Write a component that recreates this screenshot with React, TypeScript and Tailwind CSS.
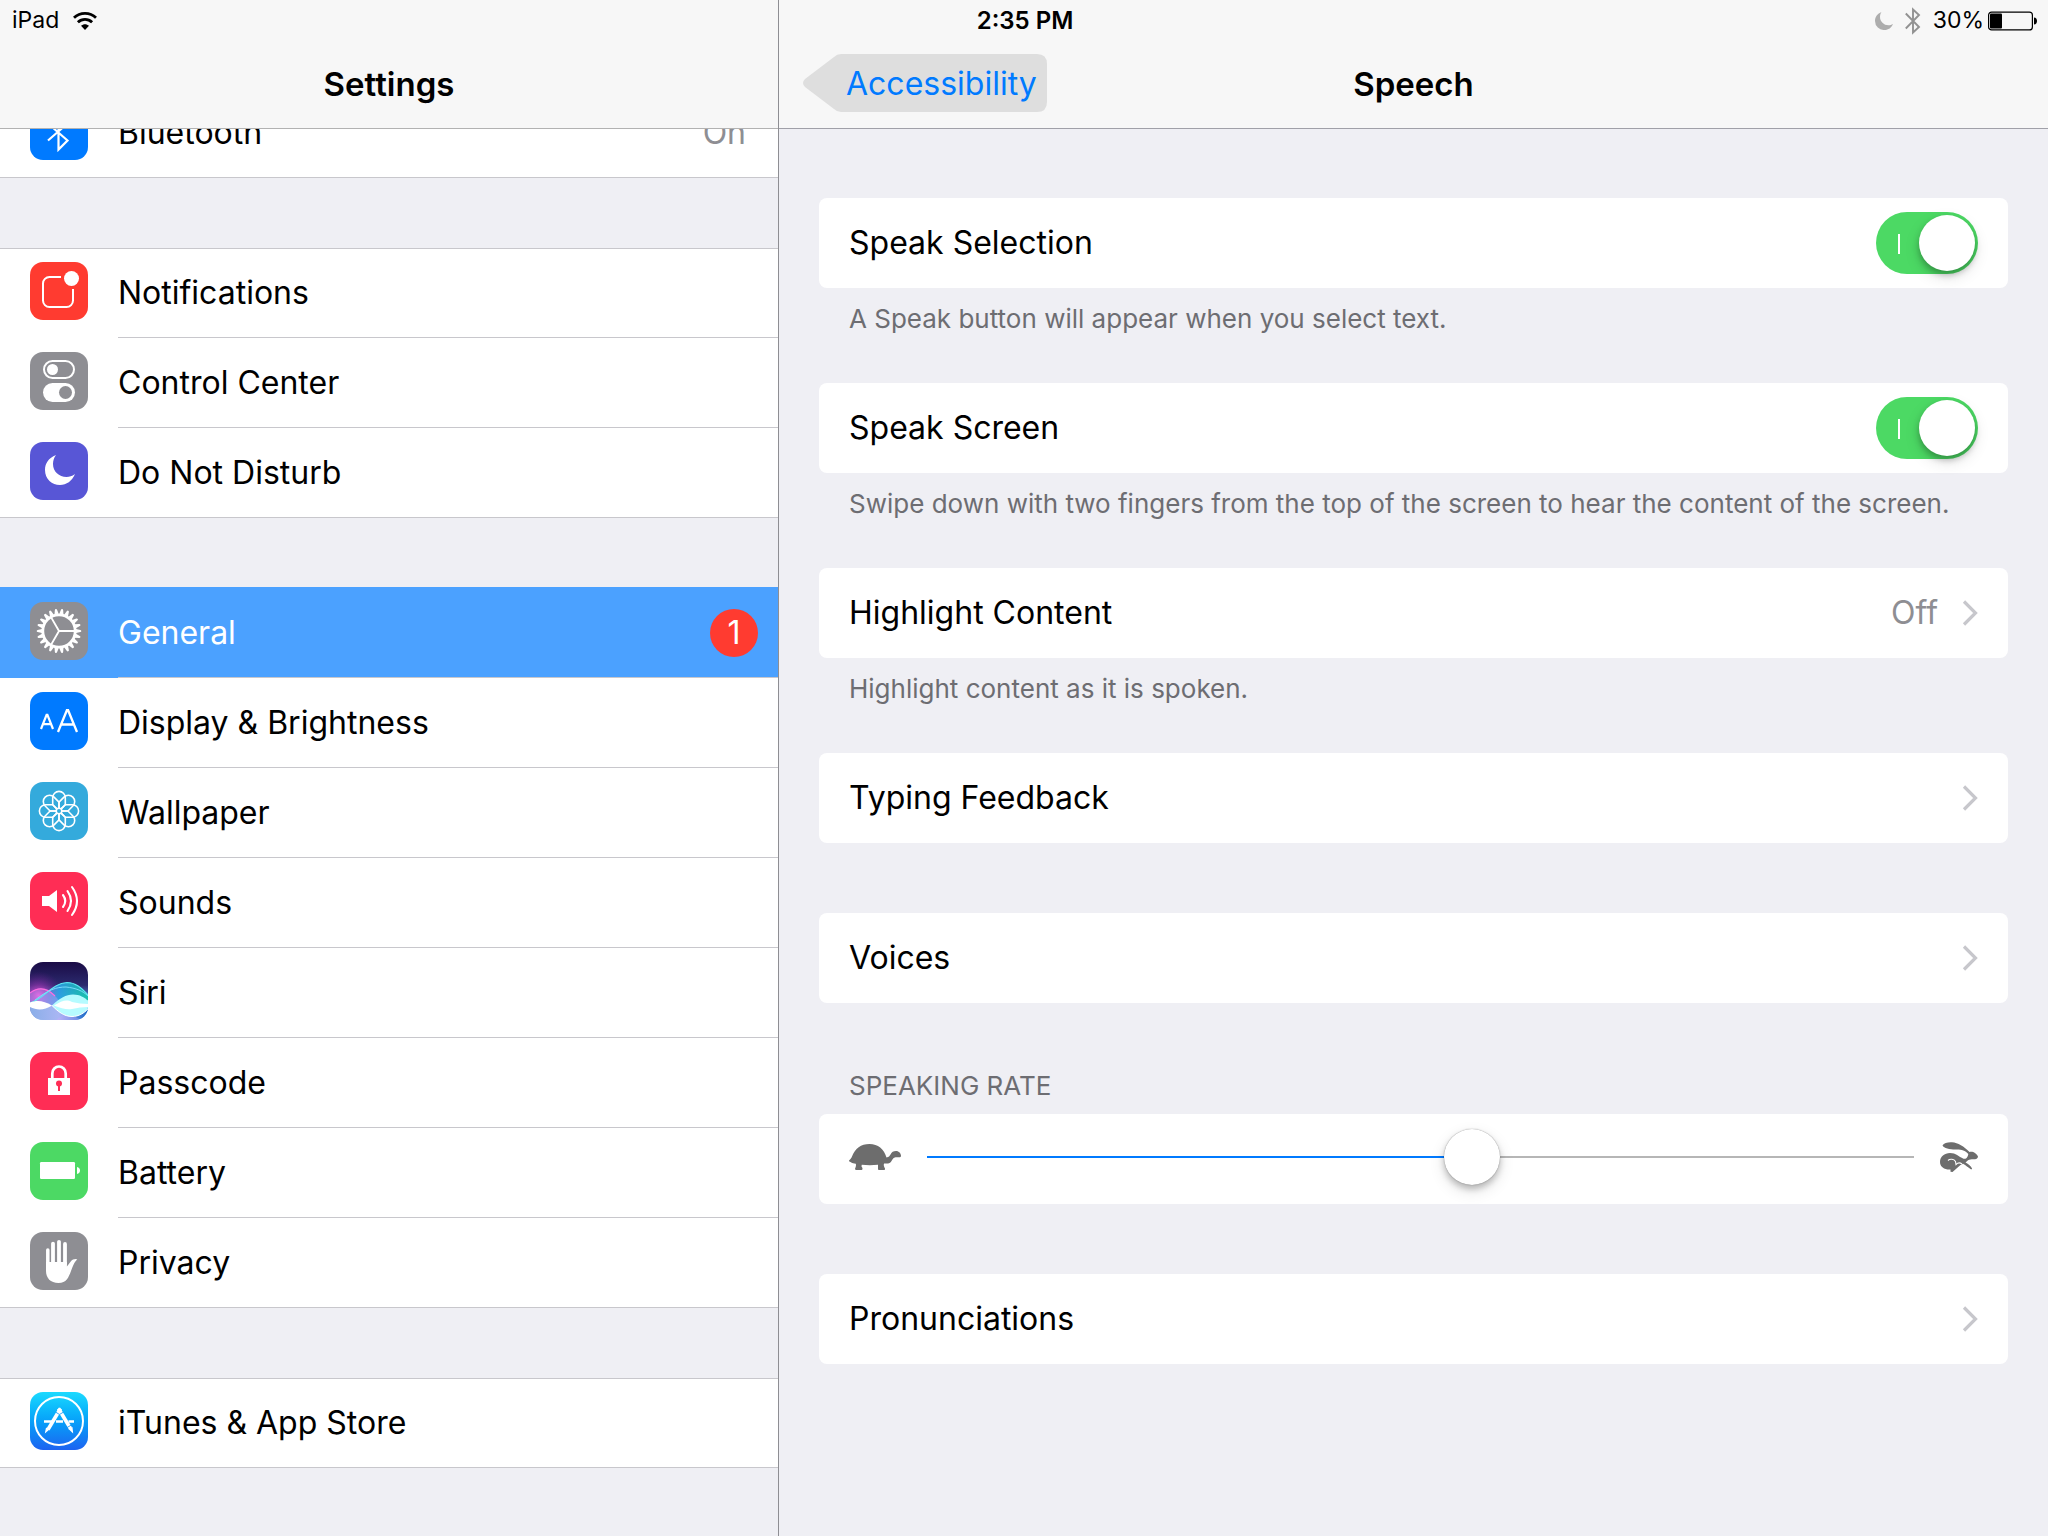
import { useState } from "react";
import type { CSSProperties, ReactNode } from "react";

function Tile({ children, className }: { children?: ReactNode; className: string }) {
  return (
    <svg viewBox="0 0 58 58" aria-hidden="true" className={`size-[58px] shrink-0 rounded-[13px] ${className}`}>
      {children}
    </svg>
  );
}

function BluetoothTile() {
  return (
    <Tile className="bg-[#007aff]">
      <path d="M18 21.5 37.5 38.5 28.5 47.5V12.500L37.5 21.5 18 38.5" fill="none" stroke="#fff" strokeWidth="2.2" />
    </Tile>
  );
}

function NotificationsTile() {
  return (
    <Tile className="bg-[#ff3b30]">
      <path d="M31 15H19.5a6.5 6.5 0 0 0-6.5 6.5v17a6.5 6.5 0 0 0 6.5 6.5h17a6.5 6.5 0 0 0 6.5-6.5V27" fill="none" stroke="#fff" strokeWidth="2" />
      <circle cx="41.5" cy="16.5" r="7.5" fill="#fff" />
    </Tile>
  );
}

function ControlCenterTile() {
  return (
    <Tile className="bg-[#8e8e93]">
      <rect x="14" y="9" width="30" height="17" rx="8.5" fill="none" stroke="#fff" strokeWidth="2" />
      <circle cx="22.5" cy="17.5" r="5.5" fill="#fff" />
      <rect x="13" y="31" width="32" height="19" rx="9.5" fill="#fff" />
      <circle cx="35.5" cy="40.5" r="6.5" fill="#8e8e93" />
    </Tile>
  );
}

function DoNotDisturbTile() {
  return (
    <Tile className="bg-[#5856d6]">
      <path d="M26 13C18.5 16 15 21.5 15 28c0 9 7 15 15 15 6.5 0 12-4 15-11-3 2.2-5.5 3-8.5 3C29 35 23 29.5 23 22c0-3.5 1-6.5 3-9z" fill="#fff" />
    </Tile>
  );
}

function GeneralTile() {
  const teeth = Array.from({ length: 22 }, (_, i) => (i * 360) / 22);
  return (
    <Tile className="bg-[#8e8e93]">
      <circle cx="29" cy="29" r="16.2" fill="none" stroke="#fff" strokeWidth="2.8" />
      {teeth.map((angle) => (
        <path key={angle} d="M46 26.9 50.4 27.9q.9.2.9 1.100t-.9 1.100L46 31.100z" fill="#fff" transform={`rotate(${angle} 29 29)`} />
      ))}
      <path d="M29 29H45M29 29 21 15.1M29 29 21 42.9" stroke="#fff" strokeWidth="1.9" fill="none" />
    </Tile>
  );
}

function DisplayTile() {
  return (
    <Tile className="bg-[#007aff]">
      <g fill="none" stroke="#fff">
        <path d="M11 37 16.6 22.8h.8L23 37M13 32.2h8" strokeWidth="2.2" />
        <path d="M28 40 36.9 18.2h1.2L47 40M31.2 32.5h12.6" strokeWidth="2.3" />
      </g>
    </Tile>
  );
}

function WallpaperTile() {
  const petals = [0, 45, 90, 135, 180, 225, 270, 315];
  return (
    <Tile className="bg-[#34aadc]">
      <g fill="none" stroke="#fff" strokeWidth="1.6">
        {petals.map((angle) => (
          <path key={angle} d="M27.1 27.1 22.7 22.7V15.7A6.3 6.3 0 0 1 35.3 15.7V22.7L30.9 27.1" transform={`rotate(${angle} 29 29)`} />
        ))}
        <circle cx="29" cy="29" r="2.8" />
      </g>
    </Tile>
  );
}

function SoundsTile() {
  return (
    <Tile className="bg-[#ff2d55]">
      <path d="M12 24h7l8-6v22l-8-6h-7z" fill="#fff" />
      <g fill="none" stroke="#fff" strokeWidth="2.1" strokeLinecap="round">
        <path d="M33 23q4.500 6 0 12" />
        <path d="M37.5 19q7 10 0 20" />
        <path d="M42 15q10 14 0 28" />
      </g>
    </Tile>
  );
}

function SiriTile() {
  return (
    <Tile className="">
      <defs>
        <linearGradient id="siri-sky" x1="0" y1="0" x2="0" y2="1">
          <stop offset="0" stopColor="#1a0b45" />
          <stop offset=".4" stopColor="#2b2a6e" />
          <stop offset=".65" stopColor="#5a8fe0" />
          <stop offset="1" stopColor="#a9c8f5" />
        </linearGradient>
        <radialGradient id="siri-pink" cx=".15" cy=".58" r=".42">
          <stop offset="0" stopColor="#f04fd8" />
          <stop offset=".5" stopColor="#8d2fa8" stopOpacity=".6" />
          <stop offset="1" stopColor="#5a1a80" stopOpacity="0" />
        </radialGradient>
        <linearGradient id="siri-hill" x1="0" y1="0" x2="1" y2="0">
          <stop offset="0" stopColor="#b48cf0" stopOpacity=".3" />
          <stop offset=".5" stopColor="#2aa4e6" />
          <stop offset="1" stopColor="#16c9a8" />
        </linearGradient>
        <linearGradient id="siri-low" x1="0" y1="0" x2="1" y2="0">
          <stop offset="0" stopColor="#8aaee8" />
          <stop offset=".5" stopColor="#a9b6f3" />
          <stop offset="1" stopColor="#1668c8" />
        </linearGradient>
      </defs>
      <rect width="58" height="58" fill="url(#siri-sky)" />
      <rect width="58" height="58" fill="url(#siri-pink)" />
      <path d="M0 41C14 37 22 21 37 20.5 47 20.5 53 28 58 33V45H0z" fill="url(#siri-hill)" opacity=".9" />
      <path d="M0 43H58V58H0z" fill="url(#siri-low)" />
      <path d="M0 31C8 24 18 24 27 36 33 44 40 54 52 58H26C36 50 46 45 58 42V45H0z" fill="#c9a6ff" opacity=".35" />
      <path d="M0 31C8 25 17 26 25 34" fill="none" stroke="#ff6be0" strokeWidth="1.2" />
      <path d="M0 41C14 37 22 21 37 20.5 47 20.5 53 28 58 33" fill="none" stroke="#5ce6f2" strokeWidth="1.1" />
      <path d="M5 38C18 28 26 25 36 25 46 26 53 29 58 34" fill="none" stroke="#7fe0ff" strokeWidth=".9" />
      <path d="M0 40.5C8 37.5 14 39 22 43.5 14 48.5 7 48.5 0 45z" fill="#fff" />
      <path d="M22 43.5C30 36 36 32.5 43 32.5c7 0 11 3 15 6V47c-4 4-9 7.5-16 7.5-8 0-14-5-20-11z" fill="#b6fbff" />
      <path d="M24 43.5C32 39 36 37 42 40q8 2 16 2v3q-8 0-16 2-8 1-18-3.5z" fill="#fff" />
      <path d="M22 43.5c6 6 12 11 20 11 7 0 12-3.5 16-7.5" fill="none" stroke="#fff" />
    </Tile>
  );
}

function PasscodeTile() {
  return (
    <Tile className="bg-[#ff2d55]">
      <path d="M22.3 27V21.5a6.7 7 0 0 1 13.4 0V27" fill="none" stroke="#fff" strokeWidth="2.7" />
      <path d="M18 26h22v17H18z" fill="#fff" />
      <circle cx="29" cy="31.5" r="3" fill="#ff2d55" />
      <path d="M28 32h2v7h-2z" fill="#ff2d55" />
    </Tile>
  );
}

function BatteryTile() {
  return (
    <Tile className="bg-[#4cd964]">
      <rect x="10" y="20" width="35" height="17" rx="1.2" fill="#fff" />
      <path d="M47 25c4 .5 4 6.5 0 7z" fill="#fff" />
    </Tile>
  );
}

function PrivacyTile() {
  return (
    <Tile className="bg-[#8e8e93]">
      <g stroke="#fff" strokeLinecap="round" strokeWidth="3.8">
        <path d="M17.8 18V32" strokeWidth="3.5" />
        <path d="M23 11.7V32" />
        <path d="M29 9.8V32" />
        <path d="M35 12V32" />
      </g>
      <path d="M16 30H36.9V34.5C39.5 31.5 41 28.5 43 27.6c1.8-.9 3.8-.9 4.300 0-3.300 2.400-4.300 6.900-6.300 11.400C38.5 45.5 36.5 51 28.5 51 20.5 51 16 46 16 39z" fill="#fff" />
    </Tile>
  );
}

function AppStoreTile() {
  return (
    <Tile className="bg-linear-to-b from-[#1ddafe] to-[#1d62f0]">
      <circle cx="29" cy="29" r="24" fill="none" stroke="#fff" strokeWidth="2" />
      <path d="M14 29.5H23.5M26 29.5h7M38.5 29.5H44" stroke="#fff" strokeWidth="2.6" />
      <path d="M30.5 16.5 18 37.5" stroke="#fff" strokeWidth="3.6" />
      <path d="M28.5 16.5 40.5 36.5" stroke="#fff" strokeWidth="3.6" />
      <path d="M16 35.5 19.5 37.5 14.8 41.5zM38.5 37 42.5 35 43.2 41.5z" fill="#fff" />
      <path d="M25.5 20 29 22.2M29.8 22.3 33.6 20M37 35.6 41 33.2" stroke="#1c9df8" strokeWidth=".9" />
    </Tile>
  );
}

type Item = { label: string; icon: ReactNode; value?: string; badge?: number; active?: boolean };

const groups: Item[][] = [
  [{ label: "Bluetooth", icon: <BluetoothTile />, value: "On" }],
  [
    { label: "Notifications", icon: <NotificationsTile /> },
    { label: "Control Center", icon: <ControlCenterTile /> },
    { label: "Do Not Disturb", icon: <DoNotDisturbTile /> },
  ],
  [
    { label: "General", icon: <GeneralTile />, badge: 1, active: true },
    { label: "Display & Brightness", icon: <DisplayTile /> },
    { label: "Wallpaper", icon: <WallpaperTile /> },
    { label: "Sounds", icon: <SoundsTile /> },
    { label: "Siri", icon: <SiriTile /> },
    { label: "Passcode", icon: <PasscodeTile /> },
    { label: "Battery", icon: <BatteryTile /> },
    { label: "Privacy", icon: <PrivacyTile /> },
  ],
  [{ label: "iTunes & App Store", icon: <AppStoreTile /> }],
];

function SidebarRow({ item, last }: { item: Item; last: boolean }) {
  return (
    <li className={item.active ? "-mt-px bg-[#4ba1ff] pt-px text-white" : ""}>
      <button type="button" className="flex h-[90px] w-full items-stretch pl-[30px] text-left">
        <span className="flex items-center pb-1">{item.icon}</span>
        <span className={`ml-[30px] flex flex-1 items-center border-b pr-5 ${last ? "border-transparent" : "border-[#c8c7cc]"}`}>
          <span className="flex-1 pt-px">{item.label}</span>
          {item.value && <span className="pr-3 text-[#8e8e93]">{item.value}</span>}
          {item.badge && (
            <span className="flex size-12 items-center justify-center rounded-full bg-[#ff3b30] text-white">{item.badge}</span>
          )}
        </span>
      </button>
    </li>
  );
}

function StatusBar() {
  return (
    <div className="z-20 col-span-full row-start-1 grid grid-cols-[1fr_auto_1fr] items-center pt-px pr-2.5 pl-3 text-[23px] leading-none">
      <div className="flex items-center gap-3.5">
        <span>iPad</span>
        <svg viewBox="0 0 24 18" className="h-[18px] w-6" aria-label="Wi-Fi">
          <g fill="none" stroke="#000" strokeWidth="2.8">
            <path d="M1 5.8C7 0 17 0 23 5.8" />
            <path d="M4.9 10.2C9 6.3 15 6.3 19.1 10.2" />
          </g>
          <path d="M8 13.8C10.5 11.6 13.5 11.6 16 13.8L12 18z" />
        </svg>
      </div>
      <span className="text-2xl leading-none font-semibold">2:35 PM</span>
      <div className="flex items-center justify-end">
        <svg viewBox="0 0 18 18" className="size-[18px]" aria-label="Do Not Disturb">
          <path d="M6.5 0C2.5 1.5 0 5 0 9a9 9 0 0 0 9.5 9c4 0 7-2.2 8.5-6-1.6 1-3 1.3-4.500 1.300C8.8 13.3 5 9.5 5 5c0-2 .5-3.6 1.5-5z" fill="#adadad" />
        </svg>
        <svg viewBox="0 0 16 28" className="ml-3 h-7 w-4" aria-label="Bluetooth">
          <path d="M.8 6.5 14 20 8 25.5V2.5L14 8 .8 21.5" fill="none" stroke="#929292" strokeWidth="1.9" />
        </svg>
        <span className="ml-3">30%</span>
        <svg viewBox="0 0 50 20" className="ml-1 h-5 w-[50px]" aria-label="Battery 30 percent">
          <rect x=".6" y="1.1" width="43.8" height="17.8" rx="3" fill="none" stroke="#000" strokeWidth="1.2" />
          <rect x="2" y="2.5" width="12" height="15" rx="1" />
          <path d="M46 6.5c4 0 4 7 0 7z" />
        </svg>
      </div>
    </div>
  );
}

function Chevron() {
  return (
    <svg viewBox="0 0 16 26" className="h-[26px] w-4 shrink-0" aria-hidden="true">
      <path d="M2 1.5 13.5 13 2 24.5" fill="none" stroke="#c7c7cc" strokeWidth="3.2" />
    </svg>
  );
}

const card = "flex h-[90px] w-full items-center rounded-lg bg-white px-[30px] text-left";

function LinkCard({ label, value }: { label: string; value?: string }) {
  return (
    <button type="button" className={card}>
      <span className="flex-1">{label}</span>
      {value && <span className="mr-6 text-[#8e8e93]">{value}</span>}
      <Chevron />
    </button>
  );
}

function SwitchCard({ label }: { label: string }) {
  const [on, setOn] = useState(true);
  return (
    <label className={card}>
      <span className="flex-1">{label}</span>
      <input
        type="checkbox"
        role="switch"
        checked={on}
        onChange={(e) => setOn(e.target.checked)}
        className="relative h-[62px] w-[102px] appearance-none rounded-full bg-[#e5e5ea] before:absolute before:top-[22px] before:left-[22px] before:h-5 before:w-0.5 before:bg-white after:absolute after:top-[3px] after:left-[3px] after:size-14 after:rounded-full after:bg-white after:shadow-[0_4px_6px_rgba(0,0,0,0.25),0_6px_16px_rgba(0,0,0,0.12)] checked:bg-[#4cd964] checked:after:left-[43px]"
      />
    </label>
  );
}

function Note({ children }: { children: ReactNode }) {
  return <p className="h-[95px] px-[30px] pt-4 text-[26px] leading-[30px] text-[#6d6d72]">{children}</p>;
}

function Turtle() {
  return (
    <svg viewBox="0 0 52 26" className="h-[26px] w-[52px] shrink-0" fill="#6d6d6d" aria-hidden="true">
      <path d="M0 16.5C1.5 15 2.5 14 3 12.5 6 4.5 12 0 20.5 0 29 0 35 5 37.5 13.5 40 13.2 40.5 12 41.5 10.5 42.5 8 44.5 7 47 7c3 0 5 2.5 5 5 0 1-.8 1.2-1.8 1.2H46.5C44.5 13.5 43.5 15 42.5 17 41.5 19 40 19.5 37.5 19.5H35C34.5 21 34.8 22.5 36 24.5c.3.8 0 1.300-.8 1.400H29.8C29 25.9 29 25 29 24.5V20.7C23.5 21.3 18 21.3 12.8 20.7 12.3 22 12.5 23 13.2 23.5c.5.8.5 2.400-.7 2.400H7.5C6 25.9 5.8 25 6.2 24.2 7 22.5 7.2 21 6.8 19.7 5 19.5 3 19 1.5 18 .5 17.8 0 17.2 0 16.5z" />
    </svg>
  );
}

function Hare() {
  return (
    <svg viewBox="0 0 38 30" className="h-[30px] w-[38px] shrink-0" fill="#6d6d6d" aria-hidden="true">
      <path d="M2.5 3.5C4 1 8 0 12 .3 18 .8 24 4.5 29.5 10 31 9.5 33.5 9.8 35 11c1 .8 2.5 2 3 3.5 0 2-2 2.8-4.500 2.800-2.500 0-4 .2-5.500 1L25.5 20.5C28.5 22 31 24 32 26.5c.3.8-.5 1-1.200.7C28 25.5 26 23.5 23 21.8L20.5 23 12.5 30 10.5 29.7V27.5C5 28 0 25 0 20 0 14.5 4.5 11 10 11c6 0 8.5 3.5 13.5 5.7C26.5 17.5 28 14.5 28.3 12 25 8.5 22 7.5 17 7.5 11 7.8 4 6.5 2.5 3.5z" />
      <path d="M8 18.5C10 16.5 14 17 15.5 19.5L16 22.5C18 20.5 20 20.5 22 22" fill="none" stroke="#fff" strokeWidth="1.1" />
    </svg>
  );
}

function RateCard() {
  const [rate, setRate] = useState(555);
  const fill = { "--fill": `${rate / 10}%` } as CSSProperties;
  return (
    <div className={`${card} pb-1`}>
      <Turtle />
      <input
        type="range"
        id="rate"
        min={0}
        max={1000}
        value={rate}
        onChange={(e) => setRate(Number(e.target.value))}
        style={fill}
        className="mx-[26px] h-14 min-w-0 flex-1 appearance-none bg-[linear-gradient(to_right,#007aff_var(--fill),#b6b6b6_var(--fill))] bg-[length:100%_2px] bg-center bg-no-repeat [&::-webkit-slider-thumb]:size-14 [&::-webkit-slider-thumb]:appearance-none [&::-webkit-slider-thumb]:rounded-full [&::-webkit-slider-thumb]:bg-white [&::-webkit-slider-thumb]:shadow-[0_0_1px_rgba(0,0,0,0.5),0_4px_6px_rgba(0,0,0,0.22),0_6px_16px_rgba(0,0,0,0.12)]"
      />
      <Hare />
    </div>
  );
}

export default function App() {
  return (
    <div className="grid min-h-screen grid-cols-[779px_minmax(0,1fr)] grid-rows-[40px_1fr] bg-[#efeff4] font-[Inter,'Liberation_Sans',sans-serif] text-[32px] leading-10 text-black">
      <StatusBar />

      <nav className="col-start-1 row-span-2 row-start-1 flex flex-col border-r border-[#8e8e93]" aria-label="Settings">
        <header className="relative z-10 flex h-[129px] items-center justify-center border-b border-[#b2b2b2] bg-[#f7f7f7] pt-10">
          <h1 className="text-[33px] leading-10 font-semibold">Settings</h1>
        </header>
        <div className="-mt-[41px] flex flex-col gap-[70px]">
          {groups.map((items) => (
            <ul key={items[0].label} className="bg-white shadow-[inset_0_1px_#c8c7cc,inset_0_-1px_#c8c7cc]">
              {items.map((item, i) => (
                <SidebarRow key={item.label} item={item} last={i === items.length - 1} />
              ))}
            </ul>
          ))}
        </div>
      </nav>

      <main className="col-start-2 row-span-2 row-start-1">
        <header className="grid h-[129px] grid-cols-[1fr_auto_1fr] items-center border-b border-[#a0a0a8] bg-[#f7f7f7] pt-10">
          <button type="button" className="relative mb-0.5 ml-6 h-[58px] w-[244px] pt-0.5 pl-[43px] text-left text-[#007aff]">
            <svg viewBox="0 0 244 58" className="absolute inset-0 size-full" aria-hidden="true">
              <path d="M2 25 31 3Q34 0 38 0H234q10 0 10 10V48q0 10-10 10H38Q34 58 31 55L2 33Q-2 29 2 25z" fill="#dedede" />
            </svg>
            <span className="relative">Accessibility</span>
          </button>
          <h2 className="text-[33px] leading-10 font-semibold">Speech</h2>
        </header>
        <div className="flex flex-col px-10 pt-[69px]">
          <SwitchCard label="Speak Selection" />
          <Note>A Speak button will appear when you select text.</Note>
          <SwitchCard label="Speak Screen" />
          <Note>Swipe down with two fingers from the top of the screen to hear the content of the screen.</Note>
          <LinkCard label="Highlight Content" value="Off" />
          <Note>Highlight content as it is spoken.</Note>
          <div className="flex flex-col gap-[70px]">
            <LinkCard label="Typing Feedback" />
            <LinkCard label="Voices" />
            <div className="flex flex-col">
              <label htmlFor="rate" className="px-[30px] pb-[15px] text-[26px] leading-[26px] text-[#6d6d72]">
                SPEAKING RATE
              </label>
              <RateCard />
            </div>
            <LinkCard label="Pronunciations" />
          </div>
        </div>
      </main>
    </div>
  );
}
